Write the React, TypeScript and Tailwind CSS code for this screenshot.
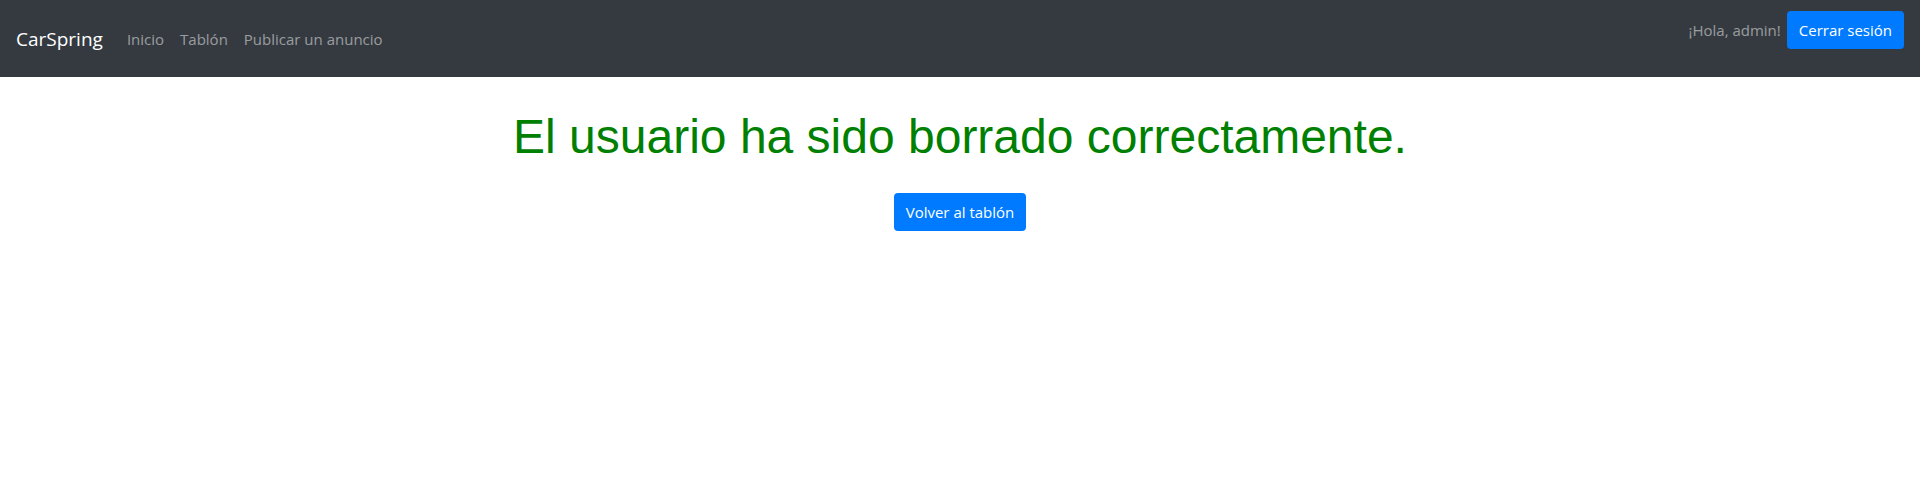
export default function App() {
  const sans = "font-['Open_Sans','Noto_Sans',sans-serif]";
  return (
    <div className={`min-h-[501px] bg-white ${sans}`}>
      <nav className="flex h-[77px] items-stretch justify-between bg-[#343a40] px-4">
        <div className="flex items-center">
          <a className="mr-4 text-[19px] leading-[30px] text-white">CarSpring</a>
          <ul className="flex text-[15px] leading-6 text-white/50">
            <li className="px-2">Inicio</li>
            <li className="px-2">Tablón</li>
            <li className="px-2">Publicar un anuncio</li>
          </ul>
        </div>
        <div className="mt-[11px] flex items-start gap-[6px] self-start">
          <span className="mt-[7px] text-[15px] leading-6 text-white/50">¡Hola, admin!</span>
          <button className="h-[38px] rounded bg-[#007bff] px-3 text-[15px] leading-6 text-white">
            Cerrar sesión
          </button>
        </div>
      </nav>
      <main className="flex flex-col items-center pt-[31px]">
        <h1 className="font-['Liberation_Sans',Arial,sans-serif] text-[48px] leading-[1.2] text-[#008000]">
          El usuario ha sido borrado correctamente.
        </h1>
        <button className="mt-[27px] h-[38px] rounded bg-[#007bff] px-3 text-[15px] leading-6 text-white">
          Volver al tablón
        </button>
      </main>
    </div>
  );
}
